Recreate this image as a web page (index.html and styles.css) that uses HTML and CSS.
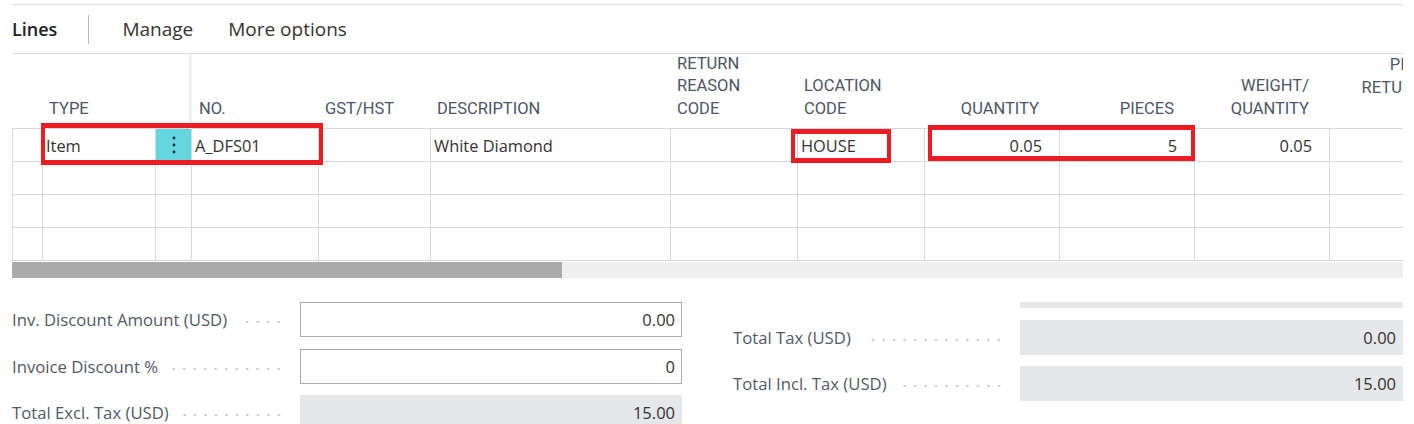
FILE: index.html
```html
<!DOCTYPE html>
<html lang="en">
<head>
<meta charset="utf-8">
<title>Lines</title>
<link rel="stylesheet" href="styles.css">
</head>
<body>
<div class="page">
  <div class="toolbar">
    <span class="tb-title">Lines</span>
    <span class="tb-sep"></span>
    <span class="tb-action">Manage</span>
    <span class="tb-action">More options</span>
  </div>

  <div class="grid-wrap">
    <div class="lines-grid">
      <div class="hc"></div>
      <div class="hc span2">TYPE</div>
      <div class="hc frozen">NO.</div>
      <div class="hc">GST/HST</div>
      <div class="hc">DESCRIPTION</div>
      <div class="hc">RETURN<br>REASON<br>CODE</div>
      <div class="hc">LOCATION<br>CODE</div>
      <div class="hc num">QUANTITY</div>
      <div class="hc num">PIECES</div>
      <div class="hc num">WEIGHT/<br>QUANTITY</div>
      <div class="hc num top">PIECES<br>RETURNED</div>

      <div class="c"></div>
      <div class="c txt">Item</div>
      <div class="c dots"><svg width="4" height="20" viewBox="0 0 4 20"><circle cx="2" cy="3" r="1.4"/><circle cx="2" cy="10" r="1.4"/><circle cx="2" cy="17" r="1.4"/></svg></div>
      <div class="c txt">A_DFS01</div>
      <div class="c"></div>
      <div class="c txt">White Diamond</div>
      <div class="c"></div>
      <div class="c txt">HOUSE</div>
      <div class="c num">0.05</div>
      <div class="c num">5</div>
      <div class="c num">0.05</div>
      <div class="c"></div>

      <div class="c"></div><div class="c"></div><div class="c"></div><div class="c"></div><div class="c"></div><div class="c"></div><div class="c"></div><div class="c"></div><div class="c"></div><div class="c"></div><div class="c"></div><div class="c"></div>
      <div class="c"></div><div class="c"></div><div class="c"></div><div class="c"></div><div class="c"></div><div class="c"></div><div class="c"></div><div class="c"></div><div class="c"></div><div class="c"></div><div class="c"></div><div class="c"></div>
      <div class="c"></div><div class="c"></div><div class="c"></div><div class="c"></div><div class="c"></div><div class="c"></div><div class="c"></div><div class="c"></div><div class="c"></div><div class="c"></div><div class="c"></div><div class="c"></div>
    </div>
    <div class="mark mark-item"></div>
    <div class="mark mark-loc"></div>
    <div class="mark mark-qty"></div>
  </div>

  <div class="hscroll"><div class="thumb"></div></div>

  <div class="totals">
    <div class="tcol">
      <div class="trow"><span class="tlabel">Inv. Discount Amount (USD)</span><span class="leader"></span><span class="tval">0.00</span></div>
      <div class="trow"><span class="tlabel">Invoice Discount %</span><span class="leader"></span><span class="tval">0</span></div>
      <div class="trow"><span class="tlabel">Total Excl. Tax (USD)</span><span class="leader"></span><span class="tval ro">15.00</span></div>
    </div>
    <div class="tcol">
      <div class="tbar"></div>
      <div class="trow"><span class="tlabel">Total Tax (USD)</span><span class="leader"></span><span class="tval ro wide">0.00</span></div>
      <div class="trow"><span class="tlabel">Total Incl. Tax (USD)</span><span class="leader"></span><span class="tval ro wide">15.00</span></div>
    </div>
  </div>
</div>
</body>
</html>
```

FILE: styles.css
```css
html, body {
  margin: 0;
  padding: 0;
  background: #ffffff;
  overflow: hidden;
  height: 424px;
}

.page {
  padding: 4px 0 0 12px;
  width: 1391px;
  font-family: "Open Sans", "Noto Sans", sans-serif;
  color: #333333;
}

/* toolbar */
.toolbar {
  display: flex;
  align-items: center;
  height: 48px;
  border-top: 1px solid #e1e1e1;
  border-bottom: 1px solid #dcdcdc;
}
.tb-title {
  font-size: 18px;
  font-weight: 600;
  color: #212121;
}
.tb-sep {
  width: 1px;
  height: 29px;
  background: #b9b9b9;
  margin: 0 33px 0 31px;
}
.tb-action {
  font-size: 19px;
  color: #333333;
  margin-right: 35px;
}

/* grid */
.grid-wrap {
  position: relative;
  width: 1391px;
  overflow: hidden;
}
.lines-grid {
  display: grid;
  grid-template-columns: 30px 113px 36px 127px 112px 240px 127px 127px 135px 135px 135px 135px;
  width: 1452px;
}
.hc {
  box-sizing: border-box;
  height: 75px;
  border-bottom: 1px solid #d7d7dd;
  padding: 0 7px 8px 7px;
  display: flex;
  align-items: flex-end;
  font-family: Roboto, "Liberation Sans", sans-serif;
  font-size: 16.5px;
  line-height: 22.5px;
  color: #4b5666;
  white-space: nowrap;
}
.hc.span2 { grid-column: span 2; }
.hc.frozen {
  border-left: 1px solid #f1f1f1;
  box-shadow: -2px 0 0 #f1f1f1;
}
.hc.num {
  justify-content: flex-end;
  text-align: right;
  padding-right: 20px;
}
.hc.top {
  align-items: flex-start;
  padding-top: 0;
}

.c {
  box-sizing: border-box;
  height: 33px;
  border-left: 1px solid #d7d7dd;
  border-bottom: 1px solid #d7d7dd;
  font-size: 16.4px;
  color: #333333;
  display: flex;
  align-items: center;
  white-space: nowrap;
  overflow: hidden;
}
.c.txt { padding-left: 3px; }
.c.num { justify-content: flex-end; padding-right: 17px; }
.c.dots {
  background: #64d6dd;
  justify-content: center;
}
.c.dots svg { fill: #2b2b2b; }

.mark {
  position: absolute;
  box-sizing: border-box;
  border-style: solid;
  border-color: #ed1c24;
  border-width: 5px 4px;
}
.mark-item { left: 29px; top: 69px; width: 282px; height: 42px; }
.mark-loc  { left: 779px; top: 75px; width: 100px; height: 34px; }
.mark-qty  { left: 916px; top: 71px; width: 267px; height: 36px; }

/* horizontal scrollbar */
.hscroll {
  margin-top: 1px;
  width: 1391px;
  height: 16px;
  background: #efefef;
}
.hscroll .thumb {
  width: 550px;
  height: 16px;
  background: #ababab;
}

/* totals */
.totals {
  display: flex;
  gap: 51px;
  margin-top: 24px;
}
.tcol {
  width: 670px;
  display: flex;
  flex-direction: column;
  gap: 11.5px;
}
.trow {
  display: flex;
  align-items: center;
  height: 35px;
}
.tlabel {
  font-size: 16.7px;
  color: #505a66;
  white-space: nowrap;
}
.leader {
  flex: 1;
  height: 4px;
  margin: 5px 16px 0 13px;
  background-image: radial-gradient(circle, #c4c4c4 0.9px, transparent 1.3px);
  background-size: 10.5px 4px;
  background-repeat: repeat-x;
  background-position: right center;
}
.tval {
  box-sizing: border-box;
  width: 382px;
  height: 35px;
  border: 1px solid #a9a9a9;
  display: flex;
  align-items: center;
  justify-content: flex-end;
  padding-right: 6px;
  font-size: 16.5px;
  color: #333333;
}
.tval.ro {
  background: #e6e7e9;
  border-color: #e6e7e9;
}
.tval.wide { width: 383px; }
.tbar {
  align-self: flex-end;
  width: 383px;
  height: 6px;
  background: #e6e7e9;
}
```
